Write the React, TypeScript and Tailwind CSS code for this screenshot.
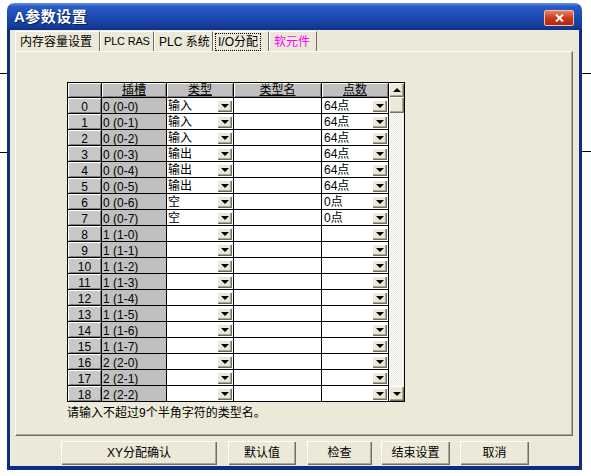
import React from 'react';

const FONT = "font-['Liberation_Sans','Noto_Sans_CJK_SC',sans-serif]";

const TYPES = ['输入', '输入', '输入', '输出', '输出', '输出', '空', '空'];
const POINTS = ['64点', '64点', '64点', '64点', '64点', '64点', '0点', '0点'];

const ROWS = Array.from({ length: 19 }, (_, i) => {
  const u = Math.floor(i / 8);
  return {
    no: i,
    slot: `${u} (${u}-${i % 8})`,
    type: TYPES[i] ?? '',
    name: '',
    points: POINTS[i] ?? '',
  };
});

const raised =
  'shadow-[inset_1px_1px_0_#ffffff,inset_-1px_-1px_0_#716f64,inset_-2px_-2px_0_#aca899]';

function DownTri() {
  return (
    <span className="block w-0 h-0 border-l-[4px] border-r-[4px] border-t-[4px] border-l-transparent border-r-transparent border-t-black" />
  );
}

function DropBtn() {
  return (
    <div className={`absolute right-[1px] top-[2px] w-[15px] h-[12px] bg-[#ece9d8] flex items-center justify-center ${raised}`}>
      <DownTri />
    </div>
  );
}

function HeadCell({ w, label }: { w: string; label: string }) {
  return (
    <div
      className={`${w} h-[15px] border-r border-b border-black bg-[#c0c0c0] flex items-center justify-center text-[12px] leading-none shadow-[inset_1px_1px_0_#ffffff,inset_-1px_-1px_0_#808080]`}
    >
      {label && <span className="underline underline-offset-[1px]">{label}</span>}
    </div>
  );
}

function Table() {
  return (
    <div className="flex">
      <div className="border-l border-t border-black">
        <div className="flex">
          <HeadCell w="w-[34px]" label="" />
          <HeadCell w="w-[65px]" label="插槽" />
          <HeadCell w="w-[67px]" label="类型" />
          <HeadCell w="w-[88px]" label="类型名" />
          <HeadCell w="w-[67px]" label="点数" />
        </div>
        {ROWS.map((r) => (
          <div key={r.no} className="flex h-[16px] text-[12px] leading-none">
            <div className="w-[34px] border-r border-b border-black bg-[#c8c8c8] flex items-center justify-center pt-[2px] shadow-[inset_1px_1px_0_#ffffff,inset_-1px_-1px_0_#808080]">
              {r.no}
            </div>
            <div className="w-[65px] border-r border-b border-black bg-[#c0c0c0] flex items-center pl-[1px] pt-[2px]">
              {r.slot}
            </div>
            <div className="relative w-[67px] border-r border-b border-black bg-white flex items-center pl-[1px] pt-[1px]">
              {r.type}
              <DropBtn />
            </div>
            <div className="w-[88px] border-r border-b border-black bg-white" />
            <div className="relative w-[67px] border-r border-b border-black bg-white flex items-center pl-[2px] pt-[1px]">
              {r.points}
              <DropBtn />
            </div>
          </div>
        ))}
      </div>
      <div className="w-[16px] h-[320px] border-t border-b border-r border-black flex flex-col bg-[repeating-conic-gradient(#ffffff_0%_25%,#e9e7dc_0%_50%)] bg-[length:2px_2px]">
        <div className={`h-[14px] bg-[#ece9d8] flex items-center justify-center ${raised}`}>
          <span className="block w-0 h-0 border-l-[4px] border-r-[4px] border-b-[4px] border-l-transparent border-r-transparent border-b-black" />
        </div>
        <div className={`h-[16px] bg-[#ece9d8] ${raised}`} />
        <div className="flex-1" />
        <div className={`h-[15px] bg-[#ece9d8] flex items-center justify-center ${raised}`}>
          <DownTri />
        </div>
      </div>
    </div>
  );
}

const TABS = [
  { label: '内存容量设置', w: 'w-[85px]', size: 'text-[12px] pl-[4px]' },
  { label: 'PLC RAS', w: 'w-[54px]', size: 'text-[11px] pl-[3px] tracking-[-0.2px]' },
  { label: 'PLC 系统', w: 'w-[59px]', size: 'text-[12px] pl-[4px]' },
  { label: 'I/O分配', w: 'w-[56px]', size: 'text-[12px] pl-[4px]', active: true },
  { label: '软元件', w: 'w-[48px]', size: 'text-[12px] pl-[4px]', pink: true },
];

const BUTTONS = [
  { label: 'XY分配确认', cls: 'ml-[51px] w-[156px]' },
  { label: '默认值', cls: 'ml-[11px] w-[68px]' },
  { label: '检查', cls: 'ml-[11px] w-[65px]' },
  { label: '结束设置', cls: 'ml-[9px] w-[69px]' },
  { label: '取消', cls: 'ml-[10px] w-[69px]' },
];

export default function App() {
  return (
    <div className={`relative w-[591px] h-[476px] bg-white overflow-hidden ${FONT} text-black`}>
      {/* bits of the app behind the dialog */}
      <div className="absolute left-0 top-[73px] w-[7px] h-px bg-black" />
      <div className="absolute left-0 top-[152px] w-[7px] h-px bg-black" />
      <div className="absolute left-[582px] top-[73px] w-[9px] h-px bg-black" />
      <div className="absolute left-[582px] top-[151px] w-[9px] h-px bg-black" />

      <div className="ml-[7px] mt-[3px] w-[575px] h-[467px] flex flex-col">
        {/* title bar */}
        <div className="h-[27px] rounded-t-[7px] bg-[linear-gradient(to_bottom,#6b95e3_0%,#2a5cc6_12%,#1d4cb4_45%,#173f9f_80%,#0f3288_100%)] flex items-center pl-[7px] pr-[8px]">
          <span className="text-white font-bold text-[15px] leading-none tracking-[0.5px] [text-shadow:1px_1px_0_#0a1f5c]">
            A参数设置
          </span>
          <div className="ml-auto mt-[3px] w-[30px] h-[16px] rounded-[2px] border border-[#f2c0b0] bg-[linear-gradient(to_bottom,#e8805f,#c8391c_50%,#b02a10)] flex items-center justify-center">
            <svg width="9" height="8" viewBox="0 0 9 8">
              <path d="M1 0.5 L8 7.5 M8 0.5 L1 7.5" stroke="white" strokeWidth="2" />
            </svg>
          </div>
        </div>

        {/* body */}
        <div className="flex-1 bg-[#ece9d8] border-l-[3px] border-r-[3px] border-b-[4px] border-[#0c2d85] flex flex-col">
          {/* tabs */}
          <div className="flex mt-[1px] ml-[5px] h-[20px] leading-none">
            {TABS.map((t) => (
              <div
                key={t.label}
                className={`${t.w} ${t.size} h-full whitespace-nowrap overflow-hidden border-t border-l border-white border-r border-r-[#716f64] flex items-center ${t.pink ? 'text-[#ff00ff]' : ''}`}
              >
                {t.active ? (
                  <span className="-ml-[2px] px-[2px] py-[2px] outline-1 outline-dotted outline-black">{t.label}</span>
                ) : (
                  t.label
                )}
              </div>
            ))}
          </div>

          {/* panel */}
          <div className="ml-[5px] w-[558px] h-[385px] border-t border-l border-white border-r border-b border-r-[#716f64] border-b-[#716f64] shadow-[inset_-1px_-1px_0_#aca899] pl-[51px] pt-[30px]">
            <Table />
            <div className="mt-[3px] text-[12px] leading-[16px]">请输入不超过9个半角字符的类型名。</div>
          </div>

          {/* buttons */}
          <div className="flex mt-[5px] h-[24px]">
            {BUTTONS.map((b) => (
              <div
                key={b.label}
                className={`${b.cls} h-full bg-[#ece9d8] flex items-center justify-center text-[12px] ${raised}`}
              >
                {b.label}
              </div>
            ))}
          </div>
        </div>
      </div>
    </div>
  );
}
